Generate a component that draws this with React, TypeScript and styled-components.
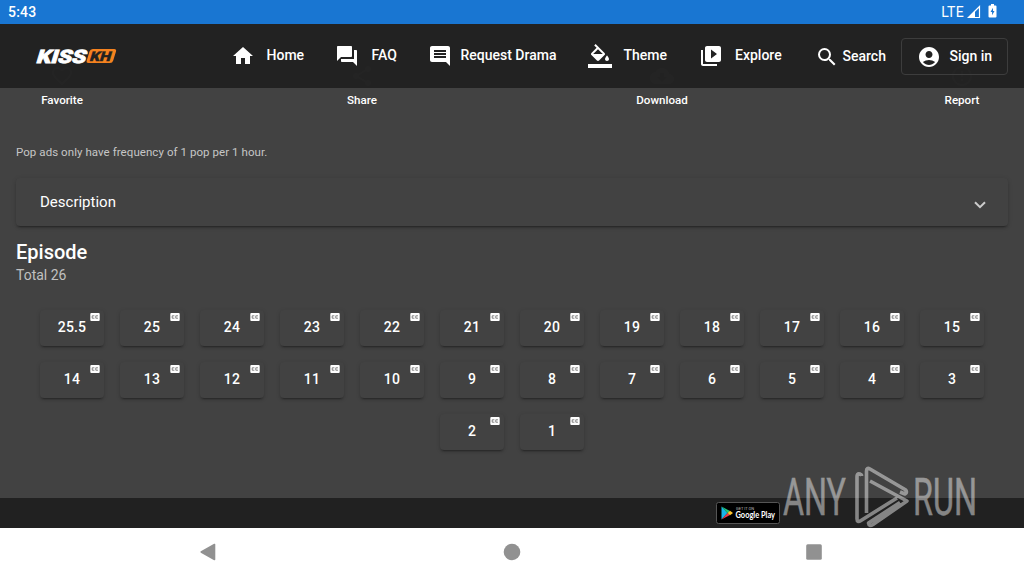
import React from "react";
import styled, { createGlobalStyle } from "styled-components";
import {
  MdHome, MdQuestionAnswer, MdComment, MdVideoLibrary, MdSearch, MdAccountCircle,
  MdFavoriteBorder, MdShare, MdCloudDownload, MdErrorOutline,
} from "react-icons/md";

const GlobalStyle = createGlobalStyle`
  *, *::before, *::after { box-sizing: border-box; }
  body { margin: 0; overflow: hidden; background: #424242; font-family: Roboto, "Liberation Sans", sans-serif; color: #fff; }
  svg { display: block; flex: none; }
`;

const Screen = styled.div`
  position: relative;
  display: flex;
  flex-direction: column;
  width: 1024px;
  height: 576px;
  background: #424242;
`;

const StatusBar = styled.div`
  display: flex;
  align-items: center;
  height: 24px;
  flex: none;
  padding: 0 27px 0 8px;
  background: #1976d2;
  font-size: 14px;
`;
const Clock = styled.span`
  flex: 1;
  font-weight: 500;
  letter-spacing: 0.2px;
`;
const Network = styled.span`
  margin-right: 3px;
  letter-spacing: 0.3px;
`;
const Battery = styled.svg`
  margin: -3px 0 0 7px;
`;

const Header = styled.header`
  position: relative;
  z-index: 1;
  display: flex;
  align-items: center;
  height: 64px;
  flex: none;
  padding: 0 16px 0 34px;
  background: rgba(33, 33, 33, 0.988);
  font-size: 14px;
  font-weight: 500;
`;
const Logo = styled.svg`
  margin-right: 110.5px;
`;
const NavItem = styled.a<{ $width: number; $gap: number }>`
  display: flex;
  align-items: center;
  flex: none;
  width: ${(p) => p.$width}px;
  gap: ${(p) => p.$gap}px;
  line-height: 24px;
  white-space: nowrap;
  & > span { margin-top: -2px; }
`;
const SearchButton = styled.a`
  display: flex;
  align-items: center;
  flex: none;
  width: 86.5px;
  gap: 4px;
  & > svg { margin-top: 2px; }
`;
const SignIn = styled.a`
  display: flex;
  align-items: center;
  flex: none;
  width: 107px;
  height: 37px;
  margin-top: 1px;
  padding-left: 15px;
  gap: 8.5px;
  border: 1px solid #3d3d3d;
  border-radius: 4px;
  white-space: nowrap;
  & > span { margin-top: -1px; }
`;

const Actions = styled.div`
  display: flex;
  justify-content: space-between;
  flex: none;
  margin-top: -24px;
  padding: 0 12px;
`;
const Action = styled.div`
  display: flex;
  flex-direction: column;
  align-items: center;
  width: 100px;
  font-size: 11.6px;
  font-weight: 500;
  line-height: 24px;
`;
const Notice = styled.p`
  margin: 28px 16px 0;
  height: 24px;
  flex: none;
  font-size: 11.5px;
  letter-spacing: 0.065px;
  line-height: 24px;
  color: #c6c6c6;
`;
const Panel = styled.section`
  display: flex;
  align-items: center;
  justify-content: space-between;
  flex: none;
  height: 48px;
  margin: 14px 16px 0;
  padding: 0 22px 0 24px;
  border-radius: 4px;
  font-size: 15px;
  background: #424242;
  box-shadow: 0 3px 1px -2px rgba(0, 0, 0, 0.2), 0 2px 2px 0 rgba(0, 0, 0, 0.14), 0 1px 5px 0 rgba(0, 0, 0, 0.12);
  & > svg { margin-top: 5px; }
`;
const Heading = styled.h2`
  margin: 14px 16px 0;
  font-size: 20px;
  font-weight: 500;
  line-height: 24px;
`;
const Total = styled.div`
  margin: 0 16px;
  font-size: 14px;
  line-height: 22px;
  color: #c0c0c0;
`;
const Episodes = styled.div`
  display: flex;
  flex-wrap: wrap;
  justify-content: center;
  gap: 16px;
  margin: 24px 32px 0;
`;
const Episode = styled.button`
  position: relative;
  width: 64px;
  height: 36px;
  padding: 0 0 2px;
  border: 0;
  border-radius: 4px;
  background: #424242;
  color: #fff;
  font: 500 14px/34px Roboto, "Liberation Sans", sans-serif;
  letter-spacing: 0.2px;
  box-shadow: 0 3px 1px -2px rgba(0, 0, 0, 0.2), 0 2px 2px 0 rgba(0, 0, 0, 0.14), 0 1px 5px 0 rgba(0, 0, 0, 0.1);
`;
const Caption = styled.svg`
  position: absolute;
  top: 3px;
  right: 4px;
`;

const Footer = styled.footer`
  display: flex;
  justify-content: flex-end;
  flex: none;
  height: 30px;
  margin-top: auto;
  padding: 4px 244px 0 0;
  background: #212121;
`;
const SystemNav = styled.nav`
  display: flex;
  align-items: center;
  justify-content: space-between;
  flex: none;
  height: 48px;
  padding: 0 202px 0 200px;
  background: #fff;
  & > :nth-child(2) { margin-left: 2px; }
`;
const Watermark = styled.svg`
  position: absolute;
  left: 776px;
  top: 460px;
  opacity: 0.45;
  overflow: visible;
`;

const FillIcon = () => (
  <svg width="24" height="24" viewBox="0 0 24 24" fill="#fff">
    <path d="M16.56 8.94L7.62 0 6.21 1.41l2.38 2.38-5.15 5.15c-.59.59-.59 1.54 0 2.12l5.5 5.5c.29.29.68.44 1.06.44s.77-.15 1.06-.44l5.5-5.5c.59-.58.59-1.53 0-2.12zM5.21 10L10 5.21 14.79 10H5.21zM19 11.5s-2 2.17-2 3.5c0 1.1.9 2 2 2s2-.9 2-2c0-1.33-2-3.5-2-3.5zM0 20h24v4H0z" />
  </svg>
);

const nav = [
  { label: "Home", icon: <MdHome size={24} />, width: 104.5, gap: 12 },
  { label: "FAQ", icon: <MdQuestionAnswer size={24} />, width: 93, gap: 12.5 },
  { label: "Request Drama", icon: <MdComment size={24} />, width: 160, gap: 8.5 },
  { label: "Theme", icon: <FillIcon />, width: 111, gap: 11.5 },
  { label: "Explore", icon: <MdVideoLibrary size={24} />, width: 115.5, gap: 12 },
];
const actions = [
  { label: "Favorite", icon: <MdFavoriteBorder size={24} /> },
  { label: "Share", icon: <MdShare size={24} /> },
  { label: "Download", icon: <MdCloudDownload size={24} /> },
  { label: "Report", icon: <MdErrorOutline size={24} /> },
];
const episodes = ["25.5", ...Array.from({ length: 25 }, (_, i) => String(25 - i))];

export default function App() {
  return (
    <>
      <GlobalStyle />
      <Screen>
        <StatusBar>
          <Clock>5:43</Clock>
          <Network>LTE</Network>
          <svg width="14" height="14" viewBox="0 0 14 14">
            <path d="M1.5 12.5L12.5 1.5v11z" fill="none" stroke="#fff" strokeWidth="1.2" />
            <path d="M0.5 13L8 5.5v7.5z" fill="#fff" />
          </svg>
          <Battery width="9" height="14" viewBox="0 0 9 14">
            <path d="M3 0h3v1.5h1.5q1 0 1 1v10q0 1-1 1h-6q-1 0-1-1v-10q0-1 1-1H3z" fill="#fff" />
            <path d="M5 3.8L2.5 8h1.6v3.2L6.5 7H5z" fill="#1976d2" />
          </Battery>
        </StatusBar>
        <Header>
          <Logo width="86" height="24" viewBox="0 0 86 24">
            <g transform="translate(1.5 19) skewX(-17)" fontFamily="Roboto, sans-serif" fontWeight="900" fontSize="18.5">
              <text x="0" y="0" fill="#fff" stroke="#fff" strokeWidth=".8" textLength="49.5" lengthAdjust="spacingAndGlyphs">KISS</text>
              <rect x="50.5" y="-13.9" width="26.5" height="14" rx="2.5" fill="#f5821f" />
              <text x="53" y="-2" fill="#212121" stroke="#212121" strokeWidth=".4" fontSize="13.5" textLength="21" lengthAdjust="spacingAndGlyphs">KH</text>
            </g>
          </Logo>
          {nav.map((n) => (
            <NavItem key={n.label} $width={n.width} $gap={n.gap}>
              {n.icon}
              <span>{n.label}</span>
            </NavItem>
          ))}
          <SearchButton>
            <MdSearch size={24} />
            <span>Search</span>
          </SearchButton>
          <SignIn>
            <MdAccountCircle size={24} />
            <span>Sign in</span>
          </SignIn>
        </Header>
        <Actions>
          {actions.map((a) => (
            <Action key={a.label}>
              {a.icon}
              <span>{a.label}</span>
            </Action>
          ))}
        </Actions>
        <Notice>Pop ads only have frequency of 1 pop per 1 hour.</Notice>
        <Panel>
          Description
          <svg width="12" height="8" viewBox="0 0 12 8" fill="none" stroke="#ccc" strokeWidth="2">
            <path d="M1 1.2l5 5 5-5" />
          </svg>
        </Panel>
        <Heading>Episode</Heading>
        <Total>Total 26</Total>
        <Episodes>
          {episodes.map((e) => (
            <Episode key={e}>
              {e}
              <Caption width="10" height="8" viewBox="0 0 10 8">
                <rect x=".3" width="9.4" height="8" rx="1" fill="#fff" />
                <path d="M4.4 2.8H2.2v2.4h2.2M8 2.8H5.8v2.4H8" fill="none" stroke="#555" strokeWidth=".7" />
              </Caption>
            </Episode>
          ))}
        </Episodes>
        <Footer>
          <svg width="64" height="22" viewBox="0 0 64 22">
            <rect x=".5" y=".5" width="63" height="21" rx="2" fill="#000" stroke="#555" />
            <path d="M5.5 4.5v13l6-6.5z" fill="#18b5e8" />
            <path d="M5.5 4.5L14 9l-2.5 2z" fill="#20c779" />
            <path d="M5.5 17.5L14 13l-2.5-2z" fill="#ed3b48" />
            <path d="M14 8.8l3 2.2-3 2.2-2.5-2.2z" fill="#fdc32c" />
            <g fill="#fff">
              <text x="20" y="8" fontFamily="Roboto, sans-serif" fontSize="4" fill="#bbb" textLength="18">GET IT ON</text>
              <text x="19.5" y="16" fontFamily="Lato, sans-serif" fontSize="8.6" fontWeight="700" textLength="39.5" lengthAdjust="spacingAndGlyphs">Google Play</text>
            </g>
          </svg>
        </Footer>
        <SystemNav>
          <svg width="16" height="18" viewBox="0 0 16 18"><path d="M1.2 9L14.5 1.5v15z" fill="#919191" stroke="#919191" strokeWidth="1.6" strokeLinejoin="round" /></svg>
          <svg width="18" height="18" viewBox="0 0 18 18"><circle cx="9" cy="9" r="8.3" fill="#919191" /></svg>
          <svg width="16" height="16" viewBox="0 0 16 16"><rect width="15.6" height="15.6" x=".2" y=".2" rx="1.5" fill="#919191" /></svg>
        </SystemNav>
        <Watermark width="230" height="70" viewBox="0 0 230 70">
          <g fill="#fff" stroke="#fff" strokeWidth=".4" fontFamily="Roboto, sans-serif" fontSize="51">
            <text x="7" y="55" textLength="63" lengthAdjust="spacingAndGlyphs">ANY</text>
            <text x="137" y="55" textLength="64" lengthAdjust="spacingAndGlyphs">RUN</text>
          </g>
          <path
            d="M85.5 16V15q-4.500-3-4.500 2v42q0 4 4 1.500L121 38 M90.500 53V11q0-4 3.500-2L129 29.500q3 2.500 0 4.500L124 32 M94 21L131 41 97 64.500q-4 2.500-4.500-1.500L124 42.500"
            fill="none"
            stroke="#fff"
            strokeWidth="3.6"
            strokeLinejoin="round"
          />
        </Watermark>
      </Screen>
    </>
  );
}
